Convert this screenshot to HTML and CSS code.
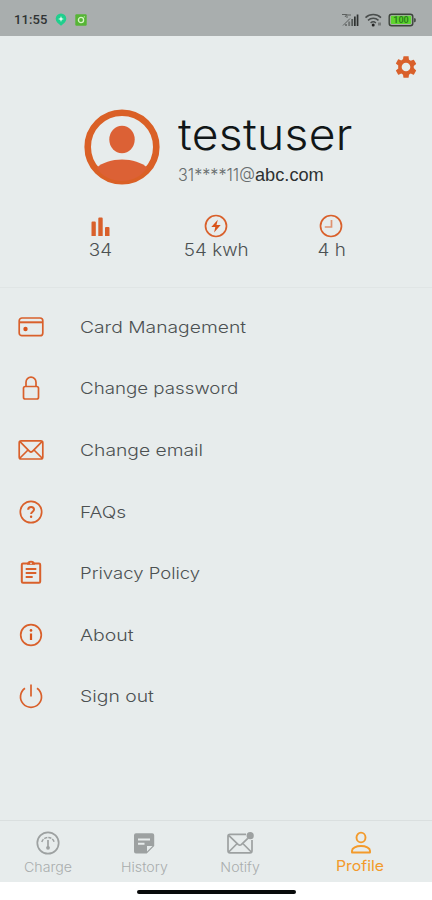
FILE: index.html
```html
<!DOCTYPE html>
<html lang="en">
<head>
<meta charset="utf-8">
<title>Profile</title>
<link rel="stylesheet" href="styles.css">
</head>
<body>
<div class="phone">
  <div class="status">
    <span class="time">11:55</span>
    <svg class="status-pin" width="12" height="14" viewBox="0 0 12 14"><path d="M6 .5a5.3 5.3 0 0 1 5.3 5.3c0 3-2.300 4.700-5.300 7-3-2.300-5.300-4-5.300-7A5.300 5.300 0 0 1 6 .5z" fill="#20cf8d"/><path d="M6 3l.8 2.200L9 6l-2.200.8L6 9l-.8-2.200L3 6l2.200-.8z" fill="#e4fff4"/></svg>
    <svg class="status-app" width="12" height="12" viewBox="0 0 12 12"><rect x=".3" y=".3" width="11.400" height="11.400" rx="1.200" fill="#56b536"/><circle cx="6" cy="6" r="2.600" fill="none" stroke="#d9f5c9" stroke-width="1.300"/><circle cx="9.300" cy="2.800" r=".6" fill="#d9f5c9"/></svg>
    <svg class="status-right" width="76" height="16" viewBox="0 0 76 16">
      <g fill="none" stroke="#5c605f" stroke-width="1"><path d="M1 2.500h4M4 5l2-3v4M7 3h3M2 13.500L9 6.500"/></g>
      <path d="M4 12h2v2H4zM7.200 9.500h2V14h-2z" fill="#707473"/><path d="M10.300 7h1.800v7h-1.800z" fill="#555958"/><path d="M13 4.500h1.700V14H13zM15.700 2.500h1.700V14h-1.700z" fill="#303332"/>
      <g fill="none" stroke="#4a4e4d" stroke-width="1.500"><path d="M24.500 5.600a11.500 11.500 0 0 1 15.500 0M27 8.400a7.800 7.800 0 0 1 10.500 0M29.600 11a4 4 0 0 1 5.300 0"/></g><circle cx="32.200" cy="13" r="1.500" fill="#222"/><path d="M37 10.500h3v3h-3z" fill="#777b7a"/>
      <rect x="48.200" y="2.200" width="23.600" height="11.500" rx="2.500" fill="#a9adac" stroke="#3c433b" stroke-width="1.400"/><rect x="49.800" y="3.800" width="20.400" height="8.300" rx="1" fill="#5fd52f"/><path d="M73 6v4.400l1.800-.8V6.800z" fill="#4b504a"/>
      <text class="battery-text" x="60" y="11" text-anchor="middle">100</text>
    </svg>
  </div>
  <header class="header">
    <div class="tools">
      <svg width="26" height="26" viewBox="0 0 24 24"><path fill="#d9602b" d="M19.140 12.940c.04-.3.06-.61.06-.94s-.02-.64-.07-.94l2.030-1.580a.49.49 0 0 0 .12-.61l-1.920-3.320a.49.49 0 0 0-.59-.22l-2.390.96a7.300 7.300 0 0 0-1.620-.94l-.36-2.540A.48.48 0 0 0 13.920 2h-3.840a.48.48 0 0 0-.47.410l-.36 2.540c-.59.24-1.130.57-1.620.94l-2.390-.96a.48.48 0 0 0-.59.22L2.740 8.470a.48.48 0 0 0 .12.610l2.030 1.580a7.300 7.300 0 0 0 0 2.680l-2.030 1.580a.49.49 0 0 0-.12.610l1.920 3.320c.12.220.37.290.59.220l2.390-.96c.5.380 1.030.7 1.620.94l.36 2.540c.05.240.24.410.48.410h3.840c.24 0 .44-.17.470-.41l.36-2.540a7.300 7.300 0 0 0 1.620-.94l2.390.96c.22.080.47 0 .59-.22l1.920-3.320a.48.48 0 0 0-.12-.61zM12 16a4 4 0 1 1 0-8 4 4 0 0 1 0 8z"/></svg>
    </div>
    <div class="identity">
      <svg class="avatar" width="76" height="76" viewBox="0 0 76 76"><circle cx="38" cy="38" r="34.300" fill="none" stroke="#da6026" stroke-width="6.600"/><ellipse cx="38" cy="30.500" rx="12.700" ry="13.800" fill="#dc6135"/><path d="M12.500 59C18 53.500 28 50.500 38 50.500S58 53.500 63.500 59C57 67 49 72 38 72S18 67 12.500 59z" fill="#dc6135"/></svg>
      <div class="who">
        <div class="name">testuser</div>
        <div class="mail"><span class="mail-user">31****11@</span><span class="mail-host">abc.com</span></div>
      </div>
    </div>
    <div class="stats">
      <div class="stat"><svg width="24" height="24" viewBox="0 0 24 24"><path fill="#d9602b" d="M2.500 8.500a1 1 0 0 1 1-1h2.300a1 1 0 0 1 1 1V22H2.500zM9.300 4.500a1 1 0 0 1 1-1h2.400a1 1 0 0 1 1 1V22H9.300zM16 14a1 1 0 0 1 1-1h2.500a1 1 0 0 1 1 1v8H16z"/></svg><span>34</span></div>
      <div class="stat"><svg width="24" height="24" viewBox="0 0 24 24"><circle class="line" cx="12" cy="12" r="10.500"/><path fill="#d9541b" d="M13.800 5.800L7.300 13h4l-1.200 5.500 6.600-7.500h-4.200z"/></svg><span>54 kwh</span></div>
      <div class="stat"><svg width="24" height="24" viewBox="0 0 24 24"><circle class="line" cx="12" cy="12" r="10.500"/><path class="line soft" d="M12.500 6v7H5.800"/></svg><span>4 h</span></div>
    </div>
  </header>
  <main class="menu">
    <div class="row"><svg width="26" height="26" viewBox="0 0 26 26"><rect class="line" x="1.200" y="4" width="23.600" height="17.700" rx="2.800"/><path d="M1 8.300h24" stroke="#d9602b" stroke-width="2"/><circle cx="7.500" cy="15" r="2.200" fill="#d9541b"/></svg><span class="card">Card Management</span></div>
    <div class="row"><svg width="26" height="26" viewBox="0 0 26 26"><rect class="line" x="5.500" y="11.500" width="15" height="12.500" rx="1.800"/><path class="line" d="M8 11.500V7.200a5 5 0 0 1 10 0v4.300"/></svg><span class="password">Change password</span></div>
    <div class="row"><svg width="26" height="26" viewBox="0 0 26 26"><rect class="line" x="1.200" y="3.800" width="23.600" height="18.200" rx="2"/><path class="line" d="M2 4.700l9.800 9.800q1.200 1 2.400 0L24 4.700M2 21l8-8M24 21l-8-8"/></svg><span class="email">Change email</span></div>
    <div class="row"><svg width="26" height="26" viewBox="0 0 26 26"><circle class="line" cx="13" cy="13" r="10.700"/><path class="line bold" d="M10.200 10.700c0-1.700 1.200-2.700 2.900-2.700s2.900 1 2.900 2.500c0 2.200-2.900 2.200-2.900 4.600"/><circle cx="13.100" cy="17.700" r="1.200" fill="#d9541b"/></svg><span class="faqs">FAQs</span></div>
    <div class="row"><svg width="26" height="26" viewBox="0 0 26 26"><path class="line bold" d="M5 3.600h16a1.200 1.200 0 0 1 1.200 1.200v16.700a1.200 1.200 0 0 1-1.200 1.200H5a1.200 1.200 0 0 1-1.200-1.200V4.800A1.200 1.200 0 0 1 5 3.600zM7.700 9h10.600M7.700 13h10.600M7.700 17h7"/><path fill="#d9602b" d="M9 4.700a4 4 0 0 1 8 0z"/><circle cx="13" cy="3.400" r=".8" fill="#e7ecec"/></svg><span class="privacy">Privacy Policy</span></div>
    <div class="row"><svg width="26" height="26" viewBox="0 0 26 26"><circle class="line" cx="13" cy="13" r="10.300"/><path d="M13 11.500V18" stroke="#d9541b" stroke-width="2.200"/><circle cx="13" cy="8.400" r="1.300" fill="#d9541b"/></svg><span class="about">About</span></div>
    <div class="row"><svg width="26" height="26" viewBox="0 0 26 26"><path class="line" d="M7 5.200a10.500 10.500 0 1 0 12 0M13 1.500v12"/></svg><span class="signout">Sign out</span></div>
  </main>
  <nav class="nav">
    <div class="tab"><svg width="28" height="26" viewBox="0 0 28 26"><g fill="none" stroke="#9da1a1" stroke-width="1.700"><circle cx="14" cy="13" r="10.700"/><path d="M7.800 12a6.500 6.500 0 0 1 12.400 0" stroke-width="1.500" stroke-dasharray="3.200 1"/><path d="M14 10v7" /></g><circle cx="14" cy="17.800" r="1.900" fill="#9da1a1"/></svg><span>Charge</span></div>
    <div class="tab"><svg width="28" height="26" viewBox="0 0 28 26"><path fill="#9da1a1" d="M6 3.200h16.200a2 2 0 0 1 2 2V16l-7.500 7.500H6a2 2 0 0 1-2-2V5.200a2 2 0 0 1 2-2z"/><path d="M8 9.500h12M8 13.800h6.500" stroke="#e7ecec" stroke-width="1.900"/><path d="M17 21.500v-5.500h5.500z" fill="#e7ecec"/></svg><span>History</span></div>
    <div class="tab"><svg width="28" height="26" viewBox="0 0 28 26"><g fill="none" stroke="#9da1a1" stroke-width="1.700"><path d="M20 4.300H4a2 2 0 0 0-2 2v14.500a2 2 0 0 0 2 2h20a2 2 0 0 0 2-2V10M2.700 5.300l9.600 9.300q1.500 1.200 3 0l6.500-6.300M2.700 22l8-8M25.300 22l-8-8"/></g><circle cx="24.200" cy="5.700" r="3.600" fill="#9da1a1"/></svg><span>Notify</span></div>
    <div class="tab active"><svg width="28" height="26" viewBox="0 0 28 26"><g fill="none" stroke="#f39a2b" stroke-width="1.900"><ellipse cx="14" cy="7.500" rx="4.500" ry="4.900"/><path d="M5 22.500v-1.800c0-2.700 4.200-4.700 9-4.700s9 2 9 4.700v1.800z" stroke-linejoin="round"/></g></svg><span>Profile</span></div>
  </nav>
  <footer class="home"><div class="handle"></div></footer>
</div>
</body>
</html>
```

FILE: styles.css
```css
* { box-sizing: border-box; }
body { margin: 0; font-family: Inter, "Liberation Sans", sans-serif; font-weight: 300; color: #4c5152; }
svg { display: block; flex: none; }
.phone { width: 432px; height: 900px; display: flex; flex-direction: column; background: #e7ecec; overflow: hidden; }
.status { height: 36px; flex: none; background: #a9aeae; display: flex; align-items: center; padding: 3px 15px 0 14px; color: #303334; }
.time { font-family: Roboto, sans-serif; font-size: 13px; font-weight: 500; letter-spacing: .1px; width: 41px; white-space: nowrap; }
.status-app { margin-left: 8px; }
.status-right { margin-left: auto; }
.battery-text { font: 700 9px Roboto, sans-serif; fill: #2c811d; }
.header { height: 252px; flex: none; border-bottom: 1px solid #e0e5e5; }
.tools { height: 72px; display: flex; justify-content: flex-end; padding: 18px 13px 0 0; }
.identity { display: flex; padding: .5px 0 0 84px; height: 105.500px; }
.who { margin-left: 18px; white-space: nowrap; }

.name, .mail-user, .stat span, .row span, .tab span { transform: scaleX(var(--wide, 1)); transform-origin: left; }
.name { --wide: 1.074; font-size: 43px; line-height: 51px; color: #111617; font-weight: 300; letter-spacing: .3px; }
.mail { display: flex; line-height: 30px; font-size: 17px; }
.mail-user { --wide: .95; width: 77px; font-weight: 300; color: #686d6e; }
.mail-host { font-family: "Liberation Sans", sans-serif; font-weight: 400; font-size: 18.200px; color: #2d3132; }
.stats { display: grid; grid-template-columns: repeat(3, 115.300px); padding-left: 43px; }
.stat { display: flex; flex-direction: column; align-items: center; font-size: 17px; line-height: 24px; }
.stat span { --wide: 1.11; transform-origin: center; }
.line { fill: none; stroke: #d9602b; stroke-width: 1.700; }
.bold { stroke-width: 2; }
.soft { stroke: #df9270; }
.menu { flex: 1; padding: 8px 0 0 18px; }
.row { height: 61.600px; display: flex; align-items: center; gap: 36px; font-size: 16.500px; white-space: nowrap; }
.row .card { --wide: 1.168; }
.row .password { --wide: 1.135; }
.row .email { --wide: 1.168; }
.row .faqs { --wide: 1.160; }
.row .privacy { --wide: 1.123; }
.row .about { --wide: 1.180; }
.row .signout { --wide: 1.172; }
.nav { height: 62px; flex: none; border-top: 1px solid #dadfdf; display: grid; grid-template-columns: 96px 96px 96px 145px; padding-top: 8.500px; }
.tab { display: flex; flex-direction: column; align-items: center; font-size: 13px; line-height: 20px; color: #a9adad; gap: 1px; }
.tab span { --wide: 1.09; transform-origin: center; }
.tab.active { font-size: 14.500px; color: #f39a2b; gap: 0; font-weight: 400; }
.home { height: 18px; flex: none; background: #fff; display: flex; justify-content: center; padding-top: 8px; }
.handle { width: 159px; height: 4px; border-radius: 2px; background: #080a0a; }
```
